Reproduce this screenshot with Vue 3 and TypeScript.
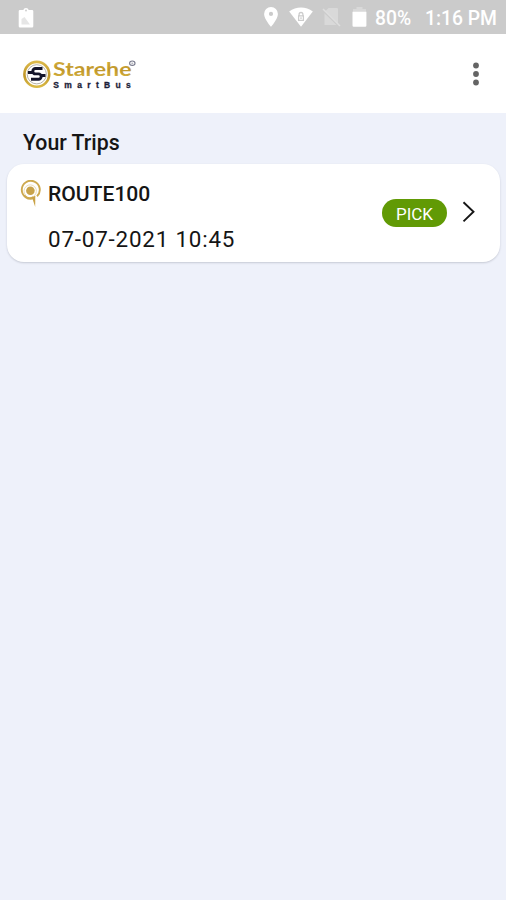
<script setup lang="ts">
interface Trip {
  route: string
  date: string
  action: string
}

const trips: Trip[] = [{ route: 'ROUTE100', date: '07-07-2021 10:45', action: 'PICK' }]
</script>

<template>
  <div class="screen">
    <div class="status">
      <svg class="clip" width="16" height="21" viewBox="0 0 16 21">
        <path d="M2 3h3.300a2.800 2.800 0 0 1 5.400 0H14a1.300 1.300 0 0 1 1.300 1.300v15A1.300 1.300 0 0 1 14 20.600H2a1.300 1.300 0 0 1-1.300-1.300v-15A1.300 1.300 0 0 1 2 3z" fill="#fff" />
        <circle cx="8" cy="3.500" r=".9" fill="#ccc" />
        <path d="M3.500 17.500v-5.500l3-2 5.500 7.500z" fill="#e6e6e6" />
      </svg>
      <div class="indicators">
        <svg class="pin" width="14" height="20" viewBox="0 0 14 20">
          <path fill-rule="evenodd" d="M7 0a6.900 6.900 0 0 0-6.900 6.900C.1 12 7 19.800 7 19.800S13.900 12 13.900 6.900A6.900 6.900 0 0 0 7 0zm0 4.800a2.100 2.100 0 1 1 0 4.200 2.100 2.100 0 0 1 0-4.200z" fill="#fff" />
        </svg>
        <svg class="wifi" width="24" height="20" viewBox="0 0 25 20" preserveAspectRatio="none">
          <path d="M.2 4.500C7.300-.9 17.700-.9 24.800 4.500L12.500 19.800z" fill="#fff" />
          <path d="M10.500 8.500V7.500a2 2 0 0 1 4 0v1M10 8.800h5v4.600h-5zM12.500 10.300v1.600" fill="none" stroke="#ccc" stroke-width="1.300" />
        </svg>
        <svg class="sim" width="19" height="20" viewBox="0 0 19 20">
          <path d="M6.500 1H15a1 1 0 0 1 1 1v16H2.500V5z" fill="#d9d9d9" />
          <path d="M1 3.500l16.500 16" stroke="#cbcbcb" stroke-width="2" />
          <path d="M1 2l17 17" stroke="#dedede" stroke-width="1.600" />
        </svg>
        <svg class="battery" width="15" height="20" viewBox="0 0 15 20">
          <path d="M4.500 0h6v2H14v4H1V2h3.500z" fill="#d9d9d9" />
          <path d="M.5 4.800h13.900V18.500a1.200 1.200 0 0 1-1.200 1.200H1.700A1.200 1.200 0 0 1 .5 18.500z" fill="#fff" />
        </svg>
        <span class="percent">80%</span>
        <span class="clock">1:16 PM</span>
      </div>
    </div>

    <header class="bar">
      <svg class="logo" width="116" height="34" viewBox="0 0 116 34">
        <defs>
          <linearGradient id="gold" x1="0" y1="0" x2="0" y2="1">
            <stop offset="0" stop-color="#dcb94a" />
            <stop offset=".55" stop-color="#bf962a" />
            <stop offset="1" stop-color="#d9b945" />
          </linearGradient>
        </defs>
        <circle cx="14.800" cy="17.300" r="12.400" fill="#fff" stroke="url(#gold)" stroke-width="2.600" />
        <circle cx="14.800" cy="17.300" r="9.600" fill="#fff" stroke="#b5b2aa" stroke-width="1" />
        <path d="M20.500 11.500h-7a2.700 2.700 0 0 0 0 5.400h3a2.700 2.700 0 0 1 0 5.400H9M6 15.500h5M18.500 18.500h5" fill="none" stroke="#14152b" stroke-width="2.900" />
        <text class="brand" x="31" y="19" textLength="78.500" lengthAdjust="spacingAndGlyphs">Starehe</text>
        <text class="subbrand" x="31.300" y="30.500" textLength="77.500" lengthAdjust="spacing">SmartBus</text>
        <ellipse cx="110.300" cy="6.200" rx="2.700" ry="2.200" fill="none" stroke="#77798c" stroke-width="1.100" />
        <path d="M109.400 6.200h1.800" stroke="#77798c" stroke-width=".8" />
      </svg>
      <svg width="8" height="24" viewBox="0 0 8 24" fill="#646464">
        <circle cx="4" cy="3.500" r="2.900" />
        <circle cx="4" cy="12" r="2.900" />
        <circle cx="4" cy="20.500" r="2.900" />
      </svg>
    </header>

    <main class="content">
      <h1 class="title">Your Trips</h1>
      <article v-for="trip in trips" :key="trip.date" class="card">
        <svg class="marker" width="22" height="28" viewBox="0 0 22 28">
          <path d="M14 18.200a9 9 0 1 1 3-1.900" fill="none" stroke="#cda94f" stroke-width="1.900" />
          <path d="M5.700 15.300a6.200 6.200 0 1 1 8.500.5" fill="none" stroke="#ead8a8" stroke-width=".9" />
          <path d="M4.500 15.500c2.500 2.800 6 3 9 1.500" fill="none" stroke="#cda94f" stroke-width="1.600" />
          <circle cx="10.400" cy="10.800" r="4.300" fill="#c8a34b" />
          <path d="M12.300 17l3-1.300-.1 11.200-2-6z" fill="#c9a246" />
        </svg>
        <div class="info">
          <div class="route">{{ trip.route }}</div>
          <div class="date">{{ trip.date }}</div>
        </div>
        <span class="pick">{{ trip.action }}</span>
        <svg class="chevron" width="14" height="22" viewBox="0 0 14 22">
          <path d="M1.500 1.200L11.500 10.800l-10 9.600" fill="none" stroke="#161616" stroke-width="1.900" />
        </svg>
      </article>
    </main>
  </div>
</template>

<style>
body {
  margin: 0;
}
</style>

<style scoped>
.screen {
  height: 900px;
  overflow: hidden;
  display: flex;
  flex-direction: column;
  background: #eef1fa;
  font-family: Roboto, "Liberation Sans", sans-serif;
  color: #151515;
}
svg {
  display: block;
  flex: none;
}
.status {
  height: 34px;
  box-sizing: border-box;
  padding: 0 8px 0 18px;
  display: flex;
  align-items: center;
  justify-content: space-between;
  background: #cbcbcb;
  color: #fff;
}
.indicators {
  display: flex;
  align-items: center;
  font-size: 19.300px;
  font-weight: 500;
  line-height: 22px;
  white-space: nowrap;
}
.wifi {
  margin-left: 11px;
}
.sim {
  margin-left: 9px;
}
.battery {
  margin-left: 11px;
}
.percent {
  width: 37px;
  margin: 3px 0 0 8px;
}
.clock {
  width: 73px;
  margin: 3px 0 0 13px;
}
.bar {
  height: 79px;
  box-sizing: border-box;
  padding: 0 26px 0 22px;
  display: flex;
  align-items: center;
  justify-content: space-between;
  background: #fff;
}
.brand {
  font: 700 19px Lato, sans-serif;
  fill: url(#gold);
}
.subbrand {
  font: 700 8.500px "Liberation Sans", sans-serif;
  fill: #1c1d38;
  stroke: #1c1d38;
  stroke-width: 0.3px;
}
.content {
  padding: 17px 6px 0 7px;
}
.title {
  margin: 0 0 9px 16px;
  font-size: 21.300px;
  line-height: 25px;
  font-weight: 500;
}
.card {
  height: 98px;
  box-sizing: border-box;
  padding: 16px 24px 0 13px;
  display: flex;
  align-items: flex-start;
  border-radius: 17px;
  background: #fff;
  box-shadow: 0 1px 2px rgba(60, 65, 80, 0.22);
}
.info {
  flex: 1;
  margin: 1px 0 0 6px;
  white-space: nowrap;
}
.route {
  font-size: 21.100px;
  line-height: 26px;
  font-weight: 500;
}
.date {
  margin-top: 19px;
  font-size: 22.400px;
  line-height: 27px;
  letter-spacing: 0.8px;
}
.pick {
  width: 65px;
  height: 28px;
  margin-top: 19px;
  border-radius: 14px;
  background: #619a05;
  color: #fff;
  font-size: 17px;
  line-height: 30px;
  text-align: center;
}
.chevron {
  margin: 21px 0 0 15px;
}
</style>
